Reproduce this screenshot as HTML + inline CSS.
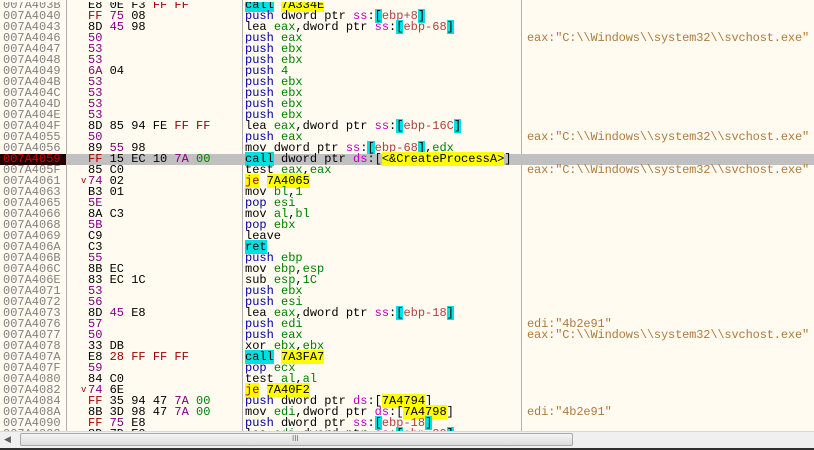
<!DOCTYPE html>
<html><head><meta charset="utf-8"><style>
body{margin:0;width:814px;height:450px;overflow:hidden;background:#fffbf0;font-family:"Liberation Mono",monospace;font-size:12px;position:relative}
#w{position:absolute;left:0;top:2px;width:814px;height:429px;overflow:hidden}
.r{position:absolute;left:0;width:814px;height:11px;line-height:11px;white-space:pre}
.a{position:absolute;left:3px;color:#808080}
.b{position:absolute;left:88px;color:#000}
.i{position:absolute;left:245px;color:#000}
.c{position:absolute;left:527px;color:#b07a3c;letter-spacing:-0.15px}
.sel{background:#c0c0c0}
.sel .a{left:0;width:66px;padding-left:3px;box-sizing:border-box;background:#200000;color:#d00000}
.p{color:#800080}.f{color:#a00000}.g{color:#008000}
.m{color:#0000a0}.rg{color:#008000}.sg{color:#c000c0}.br{background:#00e0e0}.mm{color:#b04040}
.cl{background:#00e0e0}.y{background:#ffff00}.je{background:#ffff00;color:#a00000}
.v{position:absolute;width:1px;top:0;height:431px;background:#b0b0b0}
.arr{position:absolute;left:81px;color:#a00000;font-size:9px}
</style></head><body>
<div class="v" style="left:66px"></div>
<div class="v" style="left:242px"></div>
<div class="v" style="left:521px"></div>
<div id="w">
<div class="r" style="top:-2px"><span class="a">007A403B</span><span class="b">E8 0E F3 <span class="f">FF FF</span></span><span class="i"><span class="cl">call</span> <span class="y">7A334E</span></span></div>
<div class="r" style="top:9px"><span class="a">007A4040</span><span class="b"><span class="f">FF</span> <span class="p">75</span> 08</span><span class="i"><span class="m">push</span> dword ptr <span class="sg">ss</span>:<span class="br">[</span><span class="mm">ebp+8</span><span class="br">]</span></span></div>
<div class="r" style="top:20px"><span class="a">007A4043</span><span class="b">8D <span class="p">45</span> 98</span><span class="i">lea <span class="rg">eax</span>,dword ptr <span class="sg">ss</span>:<span class="br">[</span><span class="mm">ebp-68</span><span class="br">]</span></span></div>
<div class="r" style="top:31px"><span class="a">007A4046</span><span class="b"><span class="p">50</span></span><span class="i"><span class="m">push</span> <span class="rg">eax</span></span><span class="c">eax:"C:\\Windows\\system32\\svchost.exe"</span></div>
<div class="r" style="top:42px"><span class="a">007A4047</span><span class="b"><span class="p">53</span></span><span class="i"><span class="m">push</span> <span class="rg">ebx</span></span></div>
<div class="r" style="top:53px"><span class="a">007A4048</span><span class="b"><span class="p">53</span></span><span class="i"><span class="m">push</span> <span class="rg">ebx</span></span></div>
<div class="r" style="top:64px"><span class="a">007A4049</span><span class="b"><span class="p">6A</span> 04</span><span class="i"><span class="m">push</span> <span class="g">4</span></span></div>
<div class="r" style="top:75px"><span class="a">007A404B</span><span class="b"><span class="p">53</span></span><span class="i"><span class="m">push</span> <span class="rg">ebx</span></span></div>
<div class="r" style="top:86px"><span class="a">007A404C</span><span class="b"><span class="p">53</span></span><span class="i"><span class="m">push</span> <span class="rg">ebx</span></span></div>
<div class="r" style="top:97px"><span class="a">007A404D</span><span class="b"><span class="p">53</span></span><span class="i"><span class="m">push</span> <span class="rg">ebx</span></span></div>
<div class="r" style="top:108px"><span class="a">007A404E</span><span class="b"><span class="p">53</span></span><span class="i"><span class="m">push</span> <span class="rg">ebx</span></span></div>
<div class="r" style="top:119px"><span class="a">007A404F</span><span class="b">8D 85 94 FE <span class="f">FF FF</span></span><span class="i">lea <span class="rg">eax</span>,dword ptr <span class="sg">ss</span>:<span class="br">[</span><span class="mm">ebp-16C</span><span class="br">]</span></span></div>
<div class="r" style="top:130px"><span class="a">007A4055</span><span class="b"><span class="p">50</span></span><span class="i"><span class="m">push</span> <span class="rg">eax</span></span><span class="c">eax:"C:\\Windows\\system32\\svchost.exe"</span></div>
<div class="r" style="top:141px"><span class="a">007A4056</span><span class="b">89 <span class="p">55</span> 98</span><span class="i">mov dword ptr <span class="sg">ss</span>:<span class="br">[</span><span class="mm">ebp-68</span><span class="br">]</span>,<span class="rg">edx</span></span></div>
<div class="r sel" style="top:152px"><span class="a">007A4059</span><span class="b"><span class="f">FF</span> 15 EC 10 <span class="p">7A</span> <span class="g">00</span></span><span class="i"><span class="cl">call</span> dword ptr <span class="sg">ds</span>:[<span class="y">&lt;&amp;CreateProcessA&gt;</span>]</span></div>
<div class="r" style="top:163px"><span class="a">007A405F</span><span class="b">85 C0</span><span class="i">test <span class="rg">eax</span>,<span class="rg">eax</span></span><span class="c">eax:"C:\\Windows\\system32\\svchost.exe"</span></div>
<div class="r" style="top:174px"><span class="a">007A4061</span><span class="arr">v</span><span class="b"><span class="p">74</span> 02</span><span class="i"><span class="je">je</span> <span class="y">7A4065</span></span></div>
<div class="r" style="top:185px"><span class="a">007A4063</span><span class="b">B3 01</span><span class="i">mov <span class="rg">bl</span>,<span class="g">1</span></span></div>
<div class="r" style="top:196px"><span class="a">007A4065</span><span class="b"><span class="p">5E</span></span><span class="i"><span class="m">pop</span> <span class="rg">esi</span></span></div>
<div class="r" style="top:207px"><span class="a">007A4066</span><span class="b">8A C3</span><span class="i">mov <span class="rg">al</span>,<span class="rg">bl</span></span></div>
<div class="r" style="top:218px"><span class="a">007A4068</span><span class="b"><span class="p">5B</span></span><span class="i"><span class="m">pop</span> <span class="rg">ebx</span></span></div>
<div class="r" style="top:229px"><span class="a">007A4069</span><span class="b">C9</span><span class="i">leave</span></div>
<div class="r" style="top:240px"><span class="a">007A406A</span><span class="b">C3</span><span class="i"><span class="cl">ret</span></span></div>
<div class="r" style="top:251px"><span class="a">007A406B</span><span class="b"><span class="p">55</span></span><span class="i"><span class="m">push</span> <span class="rg">ebp</span></span></div>
<div class="r" style="top:262px"><span class="a">007A406C</span><span class="b">8B EC</span><span class="i">mov <span class="rg">ebp</span>,<span class="rg">esp</span></span></div>
<div class="r" style="top:273px"><span class="a">007A406E</span><span class="b">83 EC 1C</span><span class="i">sub <span class="rg">esp</span>,<span class="g">1C</span></span></div>
<div class="r" style="top:284px"><span class="a">007A4071</span><span class="b"><span class="p">53</span></span><span class="i"><span class="m">push</span> <span class="rg">ebx</span></span></div>
<div class="r" style="top:295px"><span class="a">007A4072</span><span class="b"><span class="p">56</span></span><span class="i"><span class="m">push</span> <span class="rg">esi</span></span></div>
<div class="r" style="top:306px"><span class="a">007A4073</span><span class="b">8D <span class="p">45</span> E8</span><span class="i">lea <span class="rg">eax</span>,dword ptr <span class="sg">ss</span>:<span class="br">[</span><span class="mm">ebp-18</span><span class="br">]</span></span></div>
<div class="r" style="top:317px"><span class="a">007A4076</span><span class="b"><span class="p">57</span></span><span class="i"><span class="m">push</span> <span class="rg">edi</span></span><span class="c">edi:"4b2e91"</span></div>
<div class="r" style="top:328px"><span class="a">007A4077</span><span class="b"><span class="p">50</span></span><span class="i"><span class="m">push</span> <span class="rg">eax</span></span><span class="c">eax:"C:\\Windows\\system32\\svchost.exe"</span></div>
<div class="r" style="top:339px"><span class="a">007A4078</span><span class="b">33 DB</span><span class="i">xor <span class="rg">ebx</span>,<span class="rg">ebx</span></span></div>
<div class="r" style="top:350px"><span class="a">007A407A</span><span class="b">E8 <span class="f">28 FF FF FF</span></span><span class="i"><span class="cl">call</span> <span class="y">7A3FA7</span></span></div>
<div class="r" style="top:361px"><span class="a">007A407F</span><span class="b"><span class="p">59</span></span><span class="i"><span class="m">pop</span> <span class="rg">ecx</span></span></div>
<div class="r" style="top:372px"><span class="a">007A4080</span><span class="b">84 C0</span><span class="i">test <span class="rg">al</span>,<span class="rg">al</span></span></div>
<div class="r" style="top:383px"><span class="a">007A4082</span><span class="arr">v</span><span class="b"><span class="p">74</span> 6E</span><span class="i"><span class="je">je</span> <span class="y">7A40F2</span></span></div>
<div class="r" style="top:394px"><span class="a">007A4084</span><span class="b"><span class="f">FF</span> 35 94 47 <span class="p">7A</span> <span class="g">00</span></span><span class="i"><span class="m">push</span> dword ptr <span class="sg">ds</span>:[<span class="y">7A4794</span>]</span></div>
<div class="r" style="top:405px"><span class="a">007A408A</span><span class="b">8B 3D 98 47 <span class="p">7A</span> <span class="g">00</span></span><span class="i">mov <span class="rg">edi</span>,dword ptr <span class="sg">ds</span>:[<span class="y">7A4798</span>]</span><span class="c">edi:"4b2e91"</span></div>
<div class="r" style="top:416px"><span class="a">007A4090</span><span class="b"><span class="f">FF</span> <span class="p">75</span> E8</span><span class="i"><span class="m">push</span> dword ptr <span class="sg">ss</span>:<span class="br">[</span><span class="mm">ebp-18</span><span class="br">]</span></span></div>
<div class="r" style="top:427px"><span class="a">007A4093</span><span class="b">8D 7D E0</span><span class="i">lea <span class="rg">edi</span>,dword ptr <span class="sg">ss</span>:<span class="br">[</span><span class="mm">ebp-20</span><span class="br">]</span></span></div>
</div>
<div style="position:absolute;left:0;top:431px;width:814px;height:17px;background:#f0f0f0;border-top:1px solid #d8d8d8;box-sizing:border-box"></div>
<div style="position:absolute;left:4px;top:434px;font-size:9px;color:#606060;font-family:'Liberation Sans',sans-serif">&#9664;</div>
<div style="position:absolute;left:20px;top:433px;width:553px;height:13px;background:linear-gradient(#f4f4f4,#dcdcdc);border:1px solid #a8a8a8;border-radius:2px;box-sizing:border-box"></div>
<div style="position:absolute;left:292px;top:434px;font-size:8px;color:#707070;font-family:'Liberation Sans',sans-serif">III</div>
<div style="position:absolute;left:0;top:448px;width:814px;height:2px;background:#303030"></div>
</body></html>
